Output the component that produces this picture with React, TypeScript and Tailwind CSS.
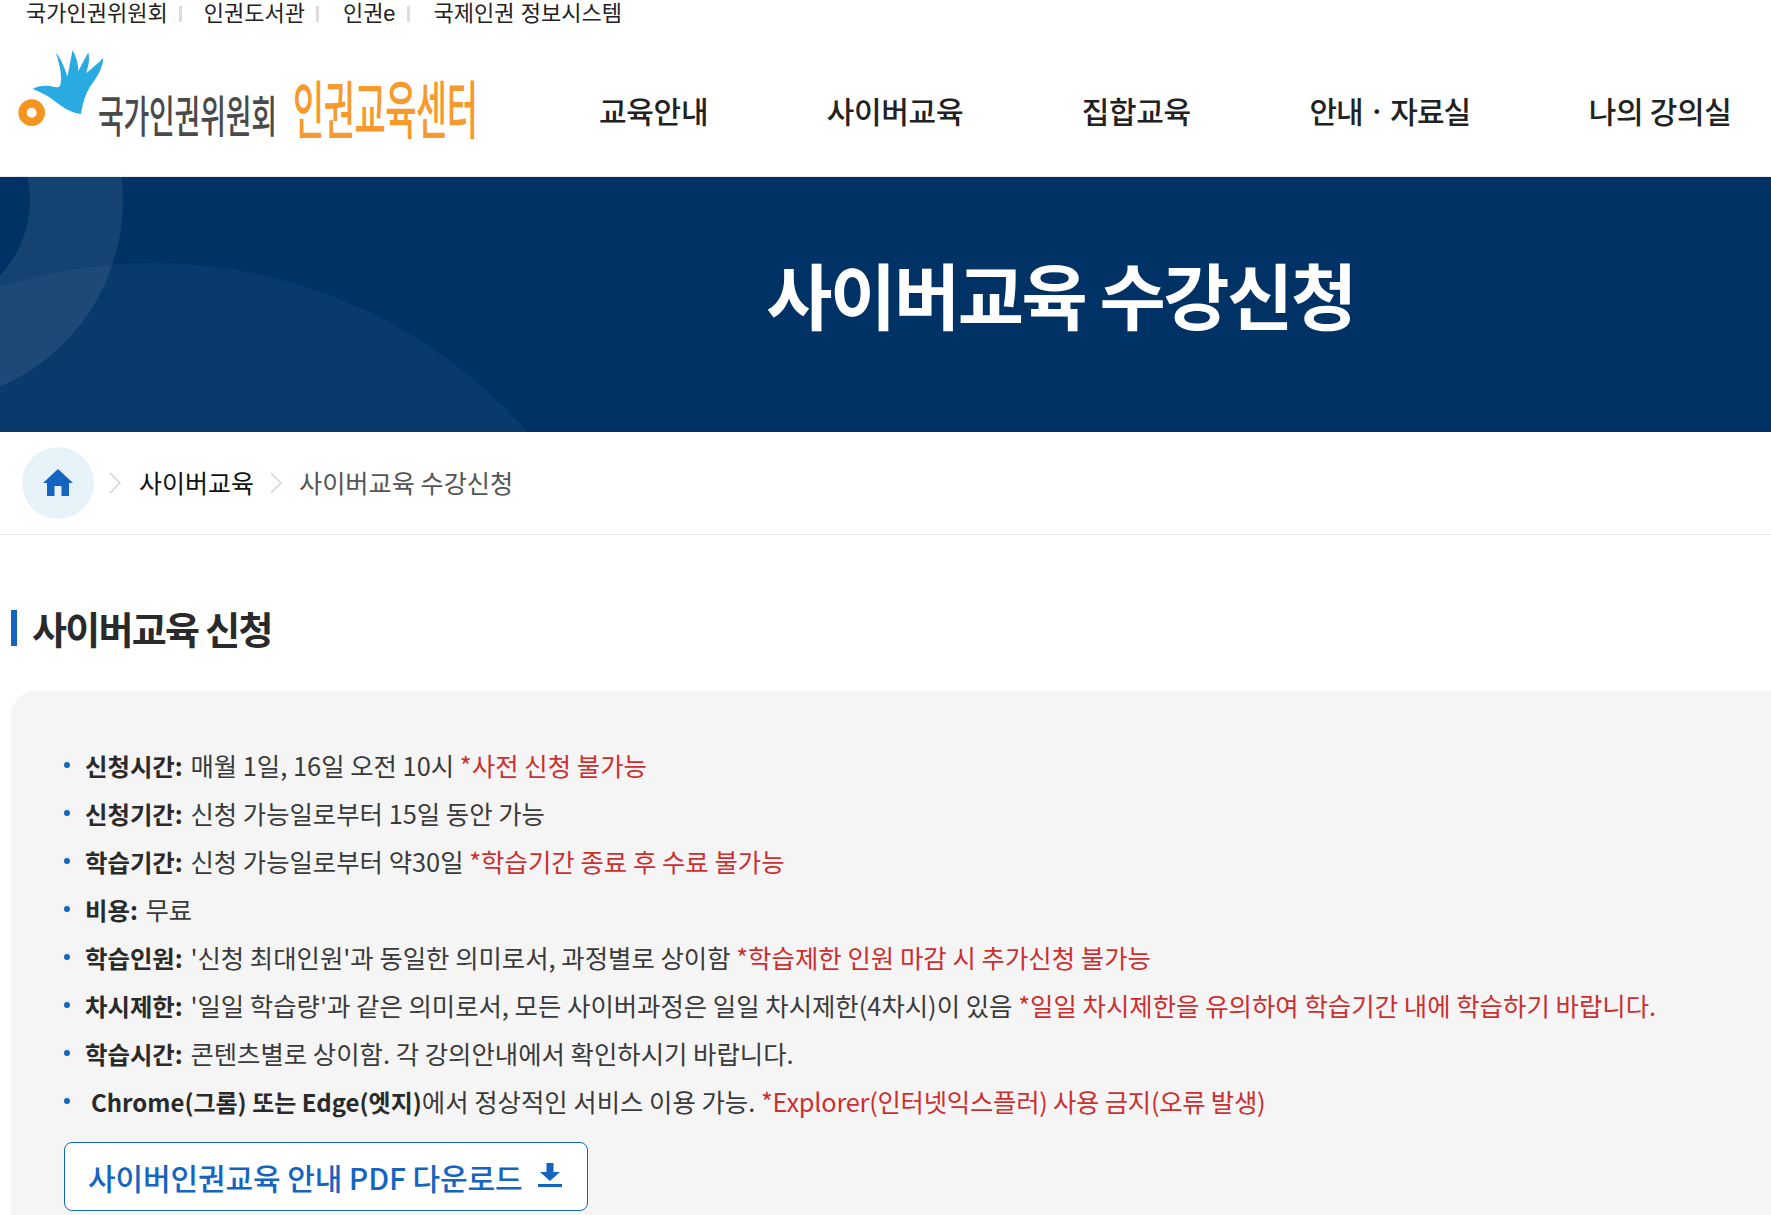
import React from "react";

const FONT = "font-['Noto_Sans_CJK_KR','Noto_Sans',sans-serif]";

function Logo() {
  return (
    <svg width="470" height="112" viewBox="0 0 470 112" className="block">
      <g transform="translate(-8 -5) scale(0.33333)">
        <path
          d="M68 132 C85 122 110 120 130 125 C140 128 146 128 150 122 C158 100 150 60 138 25 C150 35 165 70 172 95 C178 70 182 40 188 15 C198 35 205 55 205 78 C215 60 225 40 235 22 C240 45 235 65 228 85 C245 70 265 55 280 38 C278 70 262 95 240 125 C225 150 218 175 213 207 C190 205 160 190 130 165 C110 150 90 140 68 132 Z"
          fill="#29abe2"
        />
        <circle cx="65" cy="203" r="27.500" fill="none" stroke="#f7941d" strokeWidth="25" />
      </g>
      <text fontSize="28" fontWeight="500" fill="#4a4a4a" textLength="179" x="80" y="0" transform="translate(0 83) scale(1 1.6)" className={FONT}>국가인권위원회</text>
      <text fontSize="34" fontWeight="500" fill="#f79a2e" textLength="185" x="275" y="0" transform="translate(0 83) scale(1 1.85)" className={FONT}>인권교육센터</text>
    </svg>
  );
}

const items: { label: string; body: string; note?: string; pad?: boolean }[] = [
  { label: "신청시간:", body: " 매월 1일, 16일 오전 10시 ", note: "*사전 신청 불가능" },
  { label: "신청기간:", body: " 신청 가능일로부터 15일 동안 가능" },
  { label: "학습기간:", body: " 신청 가능일로부터 약30일 ", note: "*학습기간 종료 후 수료 불가능" },
  { label: "비용:", body: " 무료" },
  { label: "학습인원:", body: " '신청 최대인원'과 동일한 의미로서, 과정별로 상이함 ", note: "*학습제한 인원 마감 시 추가신청 불가능" },
  { label: "차시제한:", body: " '일일 학습량'과 같은 의미로서, 모든 사이버과정은 일일 차시제한(4차시)이 있음 ", note: "*일일 차시제한을 유의하여 학습기간 내에 학습하기 바랍니다." },
  { label: "학습시간:", body: " 콘텐츠별로 상이함. 각 강의안내에서 확인하시기 바랍니다." },
  { label: "Chrome(그롬) 또는 Edge(엣지)", body: "에서 정상적인 서비스 이용 가능. ", note: "*Explorer(인터넷익스플러) 사용 금지(오류 발생)", pad: true },
];

export default function App() {
  return (
    <div className={`${FONT} h-[1215px] w-[1771px] overflow-hidden bg-white text-[#222]`}>
      <header className="h-[176px]">
        <div className="flex h-[28px] items-center whitespace-nowrap pl-[26px] font-['Liberation_Sans','Noto_Sans_CJK_KR',sans-serif] text-[22px] leading-[28px] text-[#222]">
          <span>국가인권위원회</span>
          <span className="ml-[11px] h-[16px] w-[3px] bg-[#ddd]" />
          <span className="ml-[22px]">인권도서관</span>
          <span className="ml-[11px] h-[16px] w-[3px] bg-[#ddd]" />
          <span className="ml-[24px]">인권e</span>
          <span className="ml-[11px] h-[16px] w-[3px] bg-[#ddd]" />
          <span className="ml-[24px]">국제인권 정보시스템</span>
        </div>
        <div className="flex items-start">
          <div className="ml-[18px] mt-[22px]">
            <Logo />
          </div>
          <nav className="ml-[111px] mt-[63px] flex gap-[118.5px] whitespace-nowrap text-[30px] font-medium leading-[38px] tracking-[-0.3px] text-[#222]">
            <span>교육안내</span>
            <span>사이버교육</span>
            <span>집합교육</span>
            <span className="tracking-[-1px]">안내 · 자료실</span>
            <span>나의 강의실</span>
          </nav>
        </div>
      </header>
      <section className="relative flex h-[256px] items-center justify-center overflow-hidden border-t border-[#e8edf2] bg-[#003265] pb-[24px] pl-[350px]">
        <svg className="absolute left-0 top-0" width="700" height="256" viewBox="0 0 700 256">
          <circle cx="153" cy="586" r="500" fill="#ffffff" fillOpacity="0.04" />
          <path fillRule="evenodd" d="M-283 23 a203 203 0 1 0 406 0 a203 203 0 1 0 -406 0 Z M-190 23 a110 110 0 1 0 220 0 a110 110 0 1 0 -220 0 Z" fill="#ffffff" fillOpacity="0.08" />
        </svg>
        <h1 className="relative text-[72px] font-bold leading-[108px] tracking-[-2.4px] text-white">사이버교육 수강신청</h1>
      </section>
      <div className="flex h-[103px] items-center border-b border-[#e5e7eb] pl-[22px]">
        <div className="flex h-[72px] w-[72px] items-center justify-center rounded-full bg-[#e8f3f9]">
          <svg width="32" height="30" viewBox="0 0 32 30" fill="#1565c0">
            <path d="M16 1 L31 15 L27 15 L27 28 L19.500 28 L19.500 18 L12.500 18 L12.500 28 L5 28 L5 15 L1 15 Z" />
          </svg>
        </div>
        <svg className="ml-[15px]" width="12" height="22" viewBox="0 0 12 22" fill="none" stroke="#d4d4d4" strokeWidth="1.500">
          <path d="M1 1 L11 11 L1 21" />
        </svg>
        <span className="mb-[2px] ml-[18px] text-[25px] leading-[38px] text-[#111]">사이버교육</span>
        <svg className="ml-[16px]" width="12" height="22" viewBox="0 0 12 22" fill="none" stroke="#d4d4d4" strokeWidth="1.500">
          <path d="M1 1 L11 11 L1 21" />
        </svg>
        <span className="mb-[2px] ml-[17px] text-[25.2px] leading-[38px] text-[#555]">사이버교육 수강신청</span>
      </div>
      <div className="ml-[11px] mt-[75px] flex h-[36px] items-center border-l-[6px] border-[#1565c0] pl-[15px]">
        <h2 className="text-[38px] font-bold leading-[56px] tracking-[-1.7px] text-[#2a2a2a]">사이버교육 신청</h2>
      </div>
      <div className="ml-[11px] mt-[45px] h-[600px] rounded-tl-[25px] bg-[#f5f5f5] pl-[53px] pt-[50px]">
        <ul className="text-[25.4px] text-[#3a3a3a]">
          {items.map((it) => (
            <li key={it.label} className="flex h-[48px] items-center whitespace-pre leading-[48px]">
              <span className="h-[6px] w-[6px] rounded-full bg-[#1565c0]" />
              <span className={it.pad ? "ml-[21px]" : "ml-[15px]"}>
                <b className={it.pad ? "text-[24px] font-bold text-[#2a2a2a]" : "mr-[2px] text-[24.4px] font-bold text-[#2a2a2a]"}>{it.label}</b>
                {it.body}
                {it.note && <span className={it.pad ? "tracking-[-0.25px] text-[#cc2f2f]" : "tracking-[0.03px] text-[#cc2f2f]"}>{it.note}</span>}
              </span>
            </li>
          ))}
        </ul>
        <button className="mt-[17px] flex h-[69px] w-[524px] items-center rounded-[8px] border-[1.5px] border-[#1565c0] bg-white pl-[23px] text-[30px] font-medium leading-[44px] tracking-[-0.1px] text-[#1565c0]">
          <span>사이버인권교육 안내 PDF 다운로드</span>
          <svg className="mb-[3px] ml-[15px]" width="24" height="26" viewBox="0 0 24 26" fill="#1565c0">
            <path d="M8.500 1 H15.500 V10 H22 L12 19 L2 10 H8.500 Z" />
            <rect x="0" y="22" width="24" height="3" />
          </svg>
        </button>
      </div>
    </div>
  );
}
